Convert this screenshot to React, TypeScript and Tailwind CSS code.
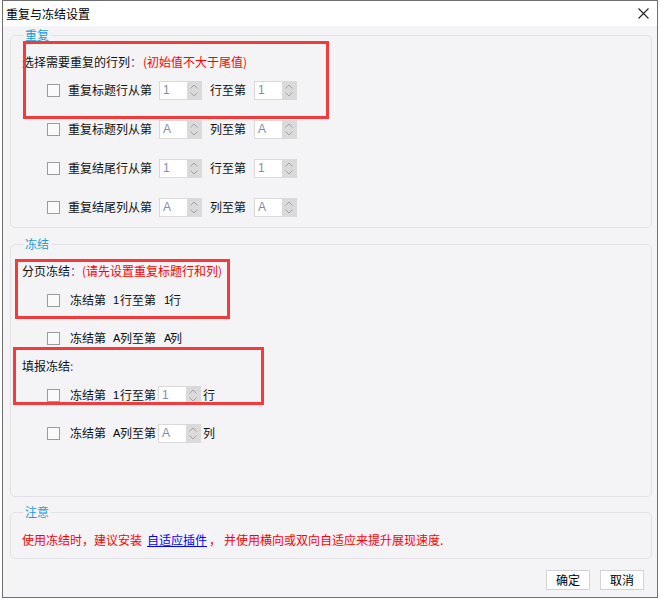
import React from 'react'

const Checkbox = () => (
  <span className="inline-block h-[13px] w-[13px] shrink-0 border border-[#9c9c9c] bg-[#fafafa]" />
)

const Spinner = () => (
  <span className="flex h-full w-[14px] items-center justify-center bg-[#dadada]">
    <svg width="10" height="17" viewBox="0 0 10 17" fill="none" stroke="#a3a3a3" strokeWidth="1">
      <path d="M1.5 6.5 L5 3 L8.5 6.5" />
      <path d="M1.5 10.5 L5 14 L8.5 10.5" />
    </svg>
  </span>
)

function NumInput({ value }: { value: string }) {
  return (
    <span className="inline-flex h-[19px] w-[43px] shrink-0 border border-[#d9d9d9] bg-white">
      <span className="flex flex-1 items-center pl-[3px] font-['Liberation_Sans',sans-serif] text-[12px] text-[#8a8aa6]">
        {value}
      </span>
      <Spinner />
    </span>
  )
}

function RepeatRow({ label, mid, value }: { label: string; mid: string; value: string }) {
  return (
    <div className="flex h-[20px] items-center pl-[25px]">
      <Checkbox />
      <span className="ml-[8px] w-[84px]">{label}</span>
      <span className="ml-[7px] flex">
        <NumInput value={value} />
      </span>
      <span className="ml-[8px] w-[36px]">{mid}</span>
      <span className="ml-[8px] flex">
        <NumInput value={value} />
      </span>
    </div>
  )
}

const Digit = ({ v }: { v: string }) => (
  <span className="inline-block w-[7px] font-['Liberation_Sans',sans-serif] text-[11px] text-black">{v}</span>
)

function Group({ title, className, children }: { title: string; className?: string; children: React.ReactNode }) {
  return (
    <fieldset className={`ml-[7px] mr-[5px] min-w-0 rounded-[5px] border border-[#e2e2e6] pl-[11px] ${className ?? ''}`}>
      <legend className="ml-[1px] px-[2px] text-[12px] leading-[18px] text-[#1f9bd7]">{title}</legend>
      {children}
    </fieldset>
  )
}

export default function App() {
  return (
    <div className="relative h-[600px] w-[660px] overflow-hidden bg-white font-['Noto_Sans_CJK_SC','Microsoft_YaHei',sans-serif] text-[12px] leading-[20px] text-[#111]">
      <div className="ml-[2px] flex h-[598px] w-[656px] flex-col border border-[#6f6f6f]">
        <div className="flex h-[25px] items-center justify-between bg-white pl-[3px] pr-[8px]">
          <span className="text-[12px] text-black">重复与冻结设置</span>
          <svg width="11" height="11" viewBox="0 0 11 11" stroke="#222" strokeWidth="1.1">
            <path d="M0.5 0.5 L10.5 10.5 M10.5 0.5 L0.5 10.5" />
          </svg>
        </div>

        <div className="flex flex-1 flex-col bg-[#f4f4f6] pb-[3px]">
          <Group title="重复" className="pb-[10px]">
            <div className="mt-[8px] flex h-[20px] items-center">
              <span>选择需要重复的行列</span>
              <span className="w-[13px] text-[#6a4a7a]">：</span>
              <span className="text-[#ff0000]">(初始值不大于尾值)</span>
            </div>
            <div className="mt-[8px]">
              <RepeatRow label="重复标题行从第" mid="行至第" value="1" />
            </div>
            <div className="mt-[19px]">
              <RepeatRow label="重复标题列从第" mid="列至第" value="A" />
            </div>
            <div className="mt-[19px]">
              <RepeatRow label="重复结尾行从第" mid="行至第" value="1" />
            </div>
            <div className="mt-[19px]">
              <RepeatRow label="重复结尾列从第" mid="列至第" value="A" />
            </div>
          </Group>

          <Group title="冻结" className="mt-[7px] pb-[53px]">
            <div className="mt-[8px] flex h-[20px] items-center">
              <span>分页冻结</span>
              <span className="w-[12px] text-[#6a4a7a]">：</span>
              <span className="text-[#ff0000]">(请先设置重复标题行和列)</span>
            </div>
            <div className="mt-[9px] flex h-[20px] items-center pl-[25px]">
              <Checkbox />
              <span className="ml-[10px]">冻结第</span>
              <span className="ml-[7px] flex"><Digit v="1" /></span>
              <span>行至第</span>
              <span className="ml-[8px] flex"><Digit v="1" /></span>
              <span className="-ml-[2px]">行</span>
            </div>
            <div className="mt-[18px] flex h-[20px] items-center pl-[25px]">
              <Checkbox />
              <span className="ml-[10px]">冻结第</span>
              <span className="ml-[7px] flex"><Digit v="A" /></span>
              <span>列至第</span>
              <span className="ml-[8px] flex"><Digit v="A" /></span>
              <span className="-ml-[1px]">列</span>
            </div>
            <div className="mt-[8px] flex h-[20px] items-center">
              <span>填报冻结</span>
              <span className="text-[#6a4a7a]">:</span>
            </div>
            <div className="mt-[9px] flex h-[20px] items-center pl-[25px]">
              <Checkbox />
              <span className="ml-[10px]">冻结第</span>
              <span className="ml-[7px] flex"><Digit v="1" /></span>
              <span>行至第</span>
              <span className="ml-[2px] flex"><NumInput value="1" /></span>
              <span className="ml-[2px]">行</span>
            </div>
            <div className="mt-[18px] flex h-[20px] items-center pl-[25px]">
              <Checkbox />
              <span className="ml-[10px]">冻结第</span>
              <span className="ml-[7px] flex"><Digit v="A" /></span>
              <span>列至第</span>
              <span className="ml-[2px] flex"><NumInput value="A" /></span>
              <span className="ml-[2px]">列</span>
            </div>
          </Group>

          <Group title="注意" className="mt-[6px] pb-[8px]">
            <div className="mt-[9px] flex h-[20px] items-center text-[#ff0000]">
              <span>使用冻结时，建议安装</span>
              <span className="ml-[5px] text-[#0000ff] underline">自适应插件</span>
              <span className="ml-[2px]">，</span>
              <span className="ml-[3px]">并使用横向或双向自适应来提升展现速度.</span>
            </div>
          </Group>

          <div className="mt-[11px] flex justify-end gap-[10px] pr-[13px]">
            <button className="flex h-[20px] w-[44px] items-center justify-center border border-[#d3d3d3] bg-white text-[12px] text-black">
              确定
            </button>
            <button className="flex h-[20px] w-[44px] items-center justify-center border border-[#d3d3d3] bg-white text-[12px] text-black">
              取消
            </button>
          </div>
        </div>
      </div>

      {/* red annotation frames drawn over the dialog */}
      <div className="pointer-events-none absolute left-[23px] top-[41px] h-[78px] w-[306px] border-[3px] border-[#f43b3b]" />
      <div className="pointer-events-none absolute left-[15px] top-[259px] h-[60px] w-[215px] border-[3px] border-[#f43b3b]" />
      <div className="pointer-events-none absolute left-[13px] top-[347px] h-[58px] w-[251px] border-[3px] border-[#f43b3b]" />
    </div>
  )
}
